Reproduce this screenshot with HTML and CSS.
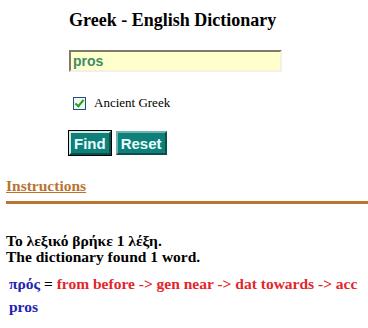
FILE: index.html
```html
<!DOCTYPE html>
<html lang="en">
<head>
    <meta charset="UTF-8">
    <title>Greek - English Dictionary</title>
    <link rel="stylesheet" href="styles.css">
</head>
<body>
    <form class="search" id="dictForm">
        <h2>Greek - English Dictionary</h2>
        <input type="text" class="word" id="word" value="pros">
        <label class="ancient"><input type="checkbox" id="ancient" checked> Ancient Greek</label>
        <div class="buttons">
            <button type="submit" class="btn focused">Find</button>
            <button type="reset" class="btn">Reset</button>
        </div>
    </form>

    <a class="instructions" href="#">Instructions</a>
    <div class="rule"></div>

    <div class="results">
        <p class="found">Το λεξικό βρήκε 1 λέξη.<br>The dictionary found 1 word.</p>
        <p class="entry"><span class="greek">πρός</span> = <span class="meaning">from before -&gt; gen near -&gt; dat towards -&gt; acc</span></p>
        <p class="entry"><span class="greek">pros</span></p>
    </div>
</body>
</html>
```

FILE: styles.css
```css
body {
    font-family: "Liberation Serif", "Times New Roman", serif;
    margin: 0;
    padding: 0 0 0 6px;
    background: white;
    color: black;
    overflow: hidden;
}
.search {
    padding-left: 63px;
    margin: 0;
}
h2 {
    font-size: 18px;
    margin: 0;
    padding-top: 10px;
    height: 40px;
}
.word {
    display: block;
    box-sizing: border-box;
    width: 213px;
    height: 22px;
    margin: 0;
    padding: 0 2px;
    border: 2px solid;
    border-color: #7f7a6a #f4f0e8 #f4f0e8 #7f7a6a;
    background: #ffffcc;
    color: #3e8b6b;
    font-family: "Liberation Sans", Arial, sans-serif;
    font-weight: bold;
    font-size: 14px;
}
.ancient {
    display: flex;
    align-items: center;
    gap: 8px;
    margin: 24px 0 0 4px;
    font-size: 13px;
    height: 14px;
}
.ancient input {
    appearance: none;
    box-sizing: border-box;
    margin: 0;
    width: 13px;
    height: 13px;
    border: 1px solid #1c5180;
    background: #f4f4f0;
    position: relative;
}
.ancient input:checked::after {
    content: "";
    position: absolute;
    left: 3px;
    top: 0;
    width: 3px;
    height: 7px;
    border: solid #21a121;
    border-width: 0 2px 2px 0;
    transform: rotate(40deg);
}
.buttons {
    display: flex;
    gap: 5px;
    margin-top: 21px;
}
.btn {
    background: #0f7f7a;
    color: #e8ffff;
    font-family: "Liberation Sans", Arial, sans-serif;
    font-weight: bold;
    font-size: 15px;
    height: 24px;
    padding: 0 3px;
    border: 2px solid;
    border-color: #6fb4b0 #0a4f4c #0a4f4c #6fb4b0;
    cursor: pointer;
}
.focused {
    outline: 1px solid black;
    border-color: #d0e8e6 #0a4f4c #0a4f4c #d0e8e6;
}
.instructions {
    display: inline-block;
    margin-top: 22px;
    color: #b9742f;
    font-weight: bold;
    font-size: 15.5px;
}
.rule {
    height: 3px;
    background: #b9742f;
    margin-top: 6px;
}
.results {
    margin-top: 29px;
    font-weight: bold;
}
.found {
    font-size: 15.5px;
    margin: 0;
    line-height: 16px;
}
.entry {
    margin: 10px 0 0 3px;
    font-size: 15.5px;
    line-height: 18px;
    white-space: nowrap;
}
.entry + .entry {
    margin-top: 5px;
}
.greek {
    color: #2323b4;
}
.meaning {
    color: #e3262b;
}
```
